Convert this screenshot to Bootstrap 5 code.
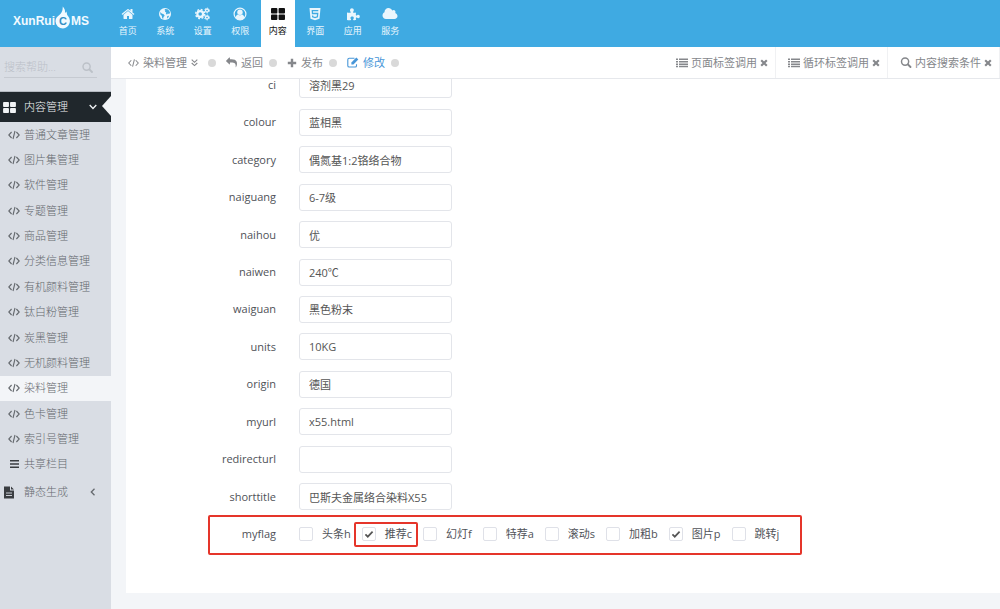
<!DOCTYPE html>
<html lang="zh-CN">
<head>
<meta charset="utf-8">
<meta name="viewport" content="width=device-width, initial-scale=1">
<title>XunRuiCMS</title>
<link href="https://cdn.jsdelivr.net/npm/bootstrap@5.3.0/dist/css/bootstrap.min.css" rel="stylesheet">
<style>
  body { font-family: "Open Sans", "Noto Sans CJK SC", sans-serif; font-size: 11px; line-height: 16px; color: #4f5258; background: #f3f5f8; }
  a { color: inherit; text-decoration: none; }
  svg { display: block; flex: none; fill: currentColor; }
  .line { fill: none; stroke: currentColor; }

  .topbar { background: #3faae2; height: 47px; }
  .brand { width: 109px; padding: 0 0 6px 13px; font: bold 12px/16px "Liberation Sans", sans-serif; color: #f2faff; }
  .flame { margin-bottom: 7px; }
  .mainnav { display: grid; grid-template-columns: repeat(8, 1fr); width: 300px; }
  .mainnav a { margin: 0 2px; padding-top: 7px; font-size: 9px; line-height: 16px; color: #eaf6fd; }
  .mainnav a svg { margin-bottom: 2px; }
  .mainnav a.active { background: #fff; color: #111; }

  .sidebar { width: 111px; flex: none; background: #d9dde4; color: #65696e; font-weight: 300; }
  .helpsearch { margin: 10px 14px 13px 4px; height: 21px; border-bottom: 1px solid #c6cad1; color: #bcc1c8; }
  .helpsearch input { font-size: 11px; line-height: 16px; font-weight: 300; background: transparent; min-width: 0; }
  .helpsearch input::placeholder { color: #bbc0c8; }
  .helpsearch button { color: inherit; }
  .section-link { height: 30px; padding: 0 14px 0 3px; }
  .section-link .label-text { margin-left: 8px; }
  .section-link.open { background: #20272c; color: #f1f3f5; position: relative; height: 31px; border-top: 1px solid #b5bac1; }
  .section-link.open::after { content: ""; position: absolute; right: 0; top: 4px; border: 10px solid transparent; border-left: 0; border-right: 9px solid #f3f5f8; }
  .submenu { display: grid; grid-auto-rows: 1fr; min-height: 355px; }
  .submenu a { padding-left: 8px; gap: 4px; }
  .submenu a.active { background: #f3f5f8; }

  .toolbar { height: 32px; background: #fff; border-bottom: 1px solid #e6e8ec; color: #85878b; position: relative; z-index: 1; white-space: nowrap; }
  .crumbs { padding-left: 17px; }
  .crumbs a { gap: 4px; }
  .crumbs a.current { color: #4796d8; }
  .dot { width: 8px; height: 8px; border-radius: 50%; background: #d9d9d9; margin: 0 10px 0 6px; }
  .dot.wide { margin-left: 10px; }
  .tab-link { width: 112px; padding: 0 8px 0 12px; gap: 3px; border-right: 1px solid #f0f1f3; }

  .panel { margin-left: 15px; background: #fff; overflow: hidden; padding-bottom: 40px; margin-bottom: 16px; }
  .fields { display: grid; grid-auto-rows: 1fr; min-height: 487px; margin-top: -13px; }
  .field { display: grid; grid-template-columns: 150px 1fr; column-gap: 23px; align-items: center; position: relative; }
  .field > .name { text-align: right; font-size: 11px; }
  .field .form-control { width: 153px; height: 27px; min-height: 0; padding: 4px 9px; font-size: 11px; line-height: 16px; color: #555; border: 1px solid #e3e5ea; border-radius: 3px; }
  .flags { gap: 11px; }
  .flag { gap: 9px; position: relative; }
  .flag input { appearance: none; width: 14px; height: 14px; margin: 0; border: 1px solid #dfe1e8; border-radius: 2px; background: #fff; }
  .flag input:checked { background: #fff url("data:image/svg+xml,%3Csvg xmlns='http://www.w3.org/2000/svg' viewBox='0 0 12 12'%3E%3Cpath d='M2.4 6.3l2.4 2.4 4.8-5' fill='none' stroke='%23555' stroke-width='1.7'/%3E%3C/svg%3E") center/12px no-repeat; }
  .outline { position: absolute; border: 2px solid #e5352a; border-radius: 2px; pointer-events: none; }
  .outline-row { left: 82px; top: -1px; bottom: -2px; width: 594px; }
  .outline-flag { left: -8px; right: -6px; top: -4px; bottom: -5px; }
</style>
<script src="https://cdn.jsdelivr.net/npm/bootstrap@5.3.0/dist/js/bootstrap.bundle.min.js"></script>
</head>
<body>
<svg width="0" height="0" class="position-absolute" aria-hidden="true">
  <symbol id="i-code" viewBox="0 0 12 10"><path class="line" stroke-width="1.1" d="M3.6 2L.8 5l2.8 3M8.4 2l2.8 3-2.8 3M7 1L5 9"/></symbol>
  <symbol id="i-list" viewBox="0 0 12 10"><path d="M0 .6h2v1.5H0zM0 3h2v1.5H0zM0 5.4h2v1.5H0zM0 7.8h2v1.5H0zM3 .6h9v1.5H3zM3 3h9v1.5H3zM3 5.4h9v1.5H3zM3 7.8h9v1.5H3z"/></symbol>
  <symbol id="i-search" viewBox="0 0 12 12"><circle class="line" stroke-width="1.6" cx="5" cy="5" r="3.9"/><path class="line" stroke-width="2" stroke-linecap="round" d="M8.2 8.2l2.7 2.7"/></symbol>
  <symbol id="i-x" viewBox="0 0 8 8"><path class="line" stroke-width="2.1" d="M1.2 1.2l5.6 5.6M6.8 1.2L1.2 6.8"/></symbol>
  <symbol id="i-grid" viewBox="0 0 14 12"><rect width="6.4" height="5.4" rx=".9"/><rect x="7.6" width="6.4" height="5.4" rx=".9"/><rect y="6.6" width="6.4" height="5.4" rx=".9"/><rect x="7.6" y="6.6" width="6.4" height="5.4" rx=".9"/></symbol>
</svg>

<div class="d-flex flex-column min-vh-100">
  <header class="topbar d-flex">
    <a href="#" class="brand d-flex align-items-center">XunRui<svg class="flame" width="16" height="23" viewBox="0 0 16 23"><path d="M8 22.500A7.500 7.500 0 0 1 .5 15.300c0-3 1.800-4.700 3.800-6.300C6.400 7.200 8 4.500 7.700.500c2 2 2.700 4.200 2.200 6.500.7-.3 1.200-.9 1.400-1.500 1 1.500.2 3 1.700 4.600a7.500 7.500 0 0 1-5 12.400z"/><text x="8" y="19" text-anchor="middle" font-size="11" fill="#3590c4">C</text></svg>MS</a>
    <nav class="mainnav">
      <a href="#" class="d-flex flex-column align-items-center"><svg width="14" height="14" viewBox="0 0 1792 1792"><path d="M1472 992v480q0 26-19 45t-45 19h-384v-384h-256v384h-384q-26 0-45-19t-19-45v-480q0-1 .5-3t.5-3l575-474 575 474q1 2 1 6zm223-69l-62 74q-8 9-21 11h-3q-13 0-21-7l-692-577-692 577q-12 8-24 7-13-2-21-11l-62-74q-8-10-7-23.500t11-21.500l719-599q32-26 76-26t76 26l244 204v-195q0-14 9-23t23-9h192q14 0 23 9t9 23v408l219 182q10 8 11 21.500t-7 23.500z"/></svg>首页</a>
      <a href="#" class="d-flex flex-column align-items-center"><svg width="14" height="14" viewBox="0 0 14 14"><circle cx="7" cy="7" r="6"/><path fill="#3faae2" d="M7.200 2l2.300.3 1.700 1.500.9 2-1 1.100-1.300-.5-.7 1-1.200-.5.4-1.500-1.300-.6.300-1.200-.9-.6zM2.200 5l1.500 1.600 2 .6 1 1.500-1.200 1.300-.3 1.800-1-.6-.4-2.400L2.400 7.500zM9.300 9l1.800-.3-.8 1.800-1.300 1z"/></svg>系统</a>
      <a href="#" class="d-flex flex-column align-items-center"><svg width="15" height="14" viewBox="0 0 15 14"><g class="line"><circle cx="5.200" cy="7" r="2.900" stroke-width="2.200"/><circle cx="5.200" cy="7" r="4.500" stroke-width="1.400" stroke-dasharray="1.900 1.630"/><circle cx="12" cy="3.500" r="1.500" stroke-width="1.300"/><circle cx="12" cy="3.500" r="2.400" stroke-width=".9" stroke-dasharray="1.300 1.210"/><circle cx="12" cy="10.500" r="1.500" stroke-width="1.300"/><circle cx="12" cy="10.500" r="2.400" stroke-width=".9" stroke-dasharray="1.300 1.210"/></g></svg>设置</a>
      <a href="#" class="d-flex flex-column align-items-center"><svg width="14" height="14" viewBox="0 0 14 14"><circle class="line" cx="7" cy="7" r="5.900" stroke-width="1.200"/><circle cx="7" cy="5.300" r="2.700"/><path d="M2.600 10.800c.3-2 1.200-3 2.500-3.200a3 3 0 0 0 3.800 0c1.300.2 2.200 1.200 2.500 3.200A5.700 5.700 0 0 1 7 13a5.700 5.700 0 0 1-4.400-2.200z"/></svg>权限</a>
      <a href="#" class="active d-flex flex-column align-items-center"><svg width="14" height="14" viewBox="0 -1 14 14"><use href="#i-grid" x="0" y="0" width="14" height="12"/></svg>内容</a>
      <a href="#" class="d-flex flex-column align-items-center"><svg width="14" height="14" viewBox="0 0 14 14"><path d="M1.500 1h11l-1 10.800L7 13.200l-4.500-1.400z"/><path fill="none" stroke="#3faae2" stroke-width="1.300" d="M10.300 3.700H4.300l.2 2.800h5.200l-.3 3.300L7 10.600l-2.300-.8-.1-1.300"/></svg>界面</a>
      <a href="#" class="d-flex flex-column align-items-center"><svg width="14" height="14" viewBox="0 0 14 14"><path d="M1 5.500c1.300.3 2.800.4 3.600.2.600-.4-.6-1.200-.6-2.400C4 2 4.800 1.300 5.900 1.300S7.800 2 7.800 3.200c0 1.200-1 1.700-.7 2.300.6.500 2 .2 3 0-.2 1-.5 2.500 0 3 .7.400 1.100-.7 2.200-.7.900 0 1.500.7 1.500 1.700s-.6 1.700-1.500 1.700c-1.100 0-1.500-1-2.200-.6-.4.500-.2 1.500 0 2.400-1 .2-2.400.2-2.900-.1-.5-.7.600-1 .6-2 0-.9-.7-1.400-1.700-1.400s-1.700.6-1.700 1.500c0 .9 1 1.300.6 2-.8.400-2.800.3-4 .1z"/></svg>应用</a>
      <a href="#" class="d-flex flex-column align-items-center"><svg width="16" height="14" viewBox="0 0 2048 1792"><path d="M1984 1152q0 159-112.500 271.500t-271.500 112.500h-1088q-185 0-316.500-131.500t-131.500-316.500q0-132 71-241.500t187-163.500q-2-28-2-43 0-212 150-362t362-150q158 0 286.500 88t187.500 230q70-62 166-62 106 0 181 75t75 181q0 75-41 138 129 30 213 134.500t84 239.500z"/></svg>服务</a>
    </nav>
  </header>

  <div class="d-flex flex-grow-1">
    <aside class="sidebar">
      <form class="helpsearch d-flex align-items-center">
        <input type="text" class="border-0 p-0 flex-grow-1" placeholder="搜索帮助..." aria-label="搜索帮助">
        <button type="button" class="border-0 bg-transparent p-0 me-1" aria-label="搜索"><svg width="11" height="11"><use href="#i-search"/></svg></button>
      </form>
      <a href="#" class="section-link open d-flex align-items-center"><svg width="13" height="11"><use href="#i-grid"/></svg><span class="label-text flex-grow-1">内容管理</span><svg width="8" height="6" viewBox="0 0 8 6"><path class="line" stroke-width="1.300" d="M.7 1L4 4.500 7.300 1"/></svg></a>
      <nav class="submenu">
        <a href="#" class="d-flex align-items-center"><svg width="12" height="10"><use href="#i-code"/></svg>普通文章管理</a>
        <a href="#" class="d-flex align-items-center"><svg width="12" height="10"><use href="#i-code"/></svg>图片集管理</a>
        <a href="#" class="d-flex align-items-center"><svg width="12" height="10"><use href="#i-code"/></svg>软件管理</a>
        <a href="#" class="d-flex align-items-center"><svg width="12" height="10"><use href="#i-code"/></svg>专题管理</a>
        <a href="#" class="d-flex align-items-center"><svg width="12" height="10"><use href="#i-code"/></svg>商品管理</a>
        <a href="#" class="d-flex align-items-center"><svg width="12" height="10"><use href="#i-code"/></svg>分类信息管理</a>
        <a href="#" class="d-flex align-items-center"><svg width="12" height="10"><use href="#i-code"/></svg>有机颜料管理</a>
        <a href="#" class="d-flex align-items-center"><svg width="12" height="10"><use href="#i-code"/></svg>钛白粉管理</a>
        <a href="#" class="d-flex align-items-center"><svg width="12" height="10"><use href="#i-code"/></svg>炭黑管理</a>
        <a href="#" class="d-flex align-items-center"><svg width="12" height="10"><use href="#i-code"/></svg>无机颜料管理</a>
        <a href="#" class="active d-flex align-items-center"><svg width="12" height="10"><use href="#i-code"/></svg>染料管理</a>
        <a href="#" class="d-flex align-items-center"><svg width="12" height="10"><use href="#i-code"/></svg>色卡管理</a>
        <a href="#" class="d-flex align-items-center"><svg width="12" height="10"><use href="#i-code"/></svg>索引号管理</a>
        <a href="#" class="d-flex align-items-center"><svg width="12" height="10" viewBox="0 0 12 10"><path fill="#3a3d41" d="M2 1h9v1.500H2zM2 4.200h9v1.500H2zM2 7.400h9v1.500H2z"/></svg>共享栏目</a>
      </nav>
      <a href="#" class="section-link d-flex align-items-center"><svg width="13" height="13" viewBox="0 0 13 13"><path fill="#3a3d41" d="M1 .5h6v4h4v8H1zM8 .5l3 3H8z"/><path stroke="#d9dde4" stroke-width=".9" d="M3 7h6M3 9.500h6"/></svg><span class="label-text flex-grow-1">静态生成</span><svg width="8" height="8" viewBox="0 0 8 8"><path class="line" stroke-width="1.300" d="M5.500.8L2.300 4l3.200 3.200"/></svg></a>
    </aside>

    <main class="flex-grow-1">
      <div class="toolbar d-flex justify-content-between">
        <div class="crumbs d-flex align-items-center">
          <a href="#" class="d-flex align-items-center"><svg width="11" height="10"><use href="#i-code"/></svg>染料管理<svg width="7" height="8" viewBox="0 0 7 8"><path class="line" stroke-width="1.100" d="M.7.700l2.800 2.600L6.300.700M.7 4l2.800 2.600L6.300 4"/></svg></a>
          <i class="dot wide"></i>
          <a href="#" class="d-flex align-items-center"><svg width="11" height="11" viewBox="0 0 1792 1792"><path transform="matrix(-1 0 0 1 1792 0)" d="M1792 640q0 26-19 45l-512 512q-19 19-45 19t-45-19-19-45v-256h-224q-98 0-175.500 6t-154 21.500-133 42.500-105.500 69.500-80 101-48.500 138.500-17.500 181q0 55 5 123 0 6 2.500 23.500t2.500 26.500q0 15-8.500 25t-23.500 10q-16 0-28-17-7-9-13-22t-13.500-30-10.500-24q-127-285-127-451 0-199 53-333 162-403 875-403h224v-256q0-26 19-45t45-19 45 19l512 512q19 19 19 45z"/></svg>返回</a>
          <i class="dot"></i>
          <a href="#" class="d-flex align-items-center"><svg width="10" height="10" viewBox="0 0 10 10"><path d="M3.800.8h2.400v3h3v2.400h-3v3H3.800v-3h-3V3.800h3z"/></svg>发布</a>
          <i class="dot"></i>
          <a href="#" class="current d-flex align-items-center"><svg width="12" height="11" viewBox="0 0 12 11"><path class="line" stroke-width="1.100" d="M7.500 1.300H2.200Q.8 1.300.8 2.700v6Q.8 10 2.200 10h6q1.300 0 1.300-1.300V7.200"/><path d="M4.400 5.500L9.300.600l2 2L6.400 7.500h-2z"/></svg>修改</a>
          <i class="dot"></i>
        </div>
        <div class="d-flex">
          <a href="#" class="tab-link d-flex align-items-center"><svg width="12" height="10"><use href="#i-list"/></svg>页面标签调用<svg width="8" height="8"><use href="#i-x"/></svg></a>
          <a href="#" class="tab-link d-flex align-items-center"><svg width="12" height="10"><use href="#i-list"/></svg>循环标签调用<svg width="8" height="8"><use href="#i-x"/></svg></a>
          <a href="#" class="tab-link d-flex align-items-center"><svg width="12" height="11"><use href="#i-search"/></svg>内容搜索条件<svg width="8" height="8"><use href="#i-x"/></svg></a>
        </div>
      </div>

      <section class="panel">
        <form class="fields">
          <div class="field"><label class="name" for="ci">ci</label><input class="form-control" id="ci" type="text" value="溶剂黑29"></div>
          <div class="field"><label class="name" for="colour">colour</label><input class="form-control" id="colour" type="text" value="蓝相黑"></div>
          <div class="field"><label class="name" for="category">category</label><input class="form-control" id="category" type="text" value="偶氮基1:2铬络合物"></div>
          <div class="field"><label class="name" for="naiguang">naiguang</label><input class="form-control" id="naiguang" type="text" value="6-7级"></div>
          <div class="field"><label class="name" for="naihou">naihou</label><input class="form-control" id="naihou" type="text" value="优"></div>
          <div class="field"><label class="name" for="naiwen">naiwen</label><input class="form-control" id="naiwen" type="text" value="240℃"></div>
          <div class="field"><label class="name" for="waiguan">waiguan</label><input class="form-control" id="waiguan" type="text" value="黑色粉末"></div>
          <div class="field"><label class="name" for="units">units</label><input class="form-control" id="units" type="text" value="10KG"></div>
          <div class="field"><label class="name" for="origin">origin</label><input class="form-control" id="origin" type="text" value="德国"></div>
          <div class="field"><label class="name" for="myurl">myurl</label><input class="form-control" id="myurl" type="text" value="x55.html"></div>
          <div class="field"><label class="name" for="redirecturl">redirecturl</label><input class="form-control" id="redirecturl" type="text" value=""></div>
          <div class="field"><label class="name" for="shorttitle">shorttitle</label><input class="form-control" id="shorttitle" type="text" value="巴斯夫金属络合染料X55"></div>
          <div class="field" role="group" aria-labelledby="myflag">
            <span class="name" id="myflag">myflag</span>
            <div class="flags d-flex">
              <label class="flag d-flex align-items-center"><input type="checkbox">头条h</label>
              <label class="flag d-flex align-items-center"><input type="checkbox" checked>推荐c<span class="outline outline-flag"></span></label>
              <label class="flag d-flex align-items-center"><input type="checkbox">幻灯f</label>
              <label class="flag d-flex align-items-center"><input type="checkbox">特荐a</label>
              <label class="flag d-flex align-items-center"><input type="checkbox">滚动s</label>
              <label class="flag d-flex align-items-center"><input type="checkbox">加粗b</label>
              <label class="flag d-flex align-items-center"><input type="checkbox" checked>图片p</label>
              <label class="flag d-flex align-items-center"><input type="checkbox">跳转j</label>
            </div>
            <span class="outline outline-row"></span>
          </div>
        </form>
      </section>
    </main>
  </div>
</div>
</body>
</html>
